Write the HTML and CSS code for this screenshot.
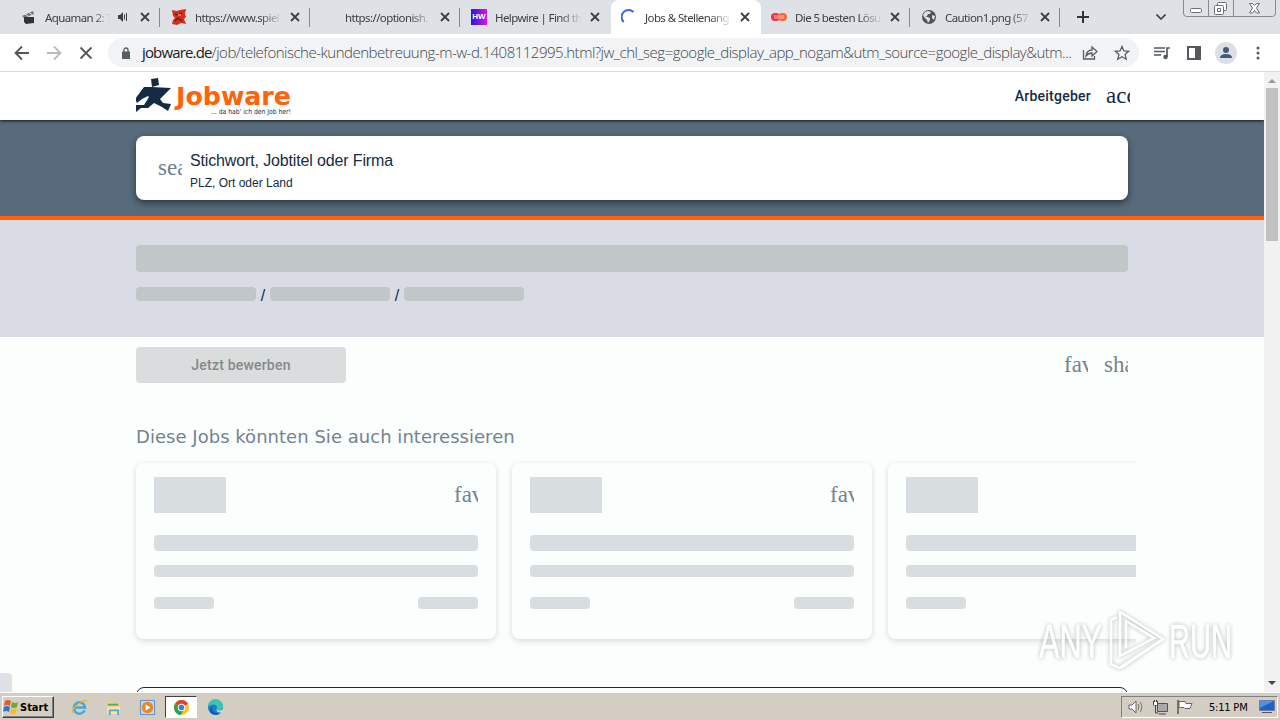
FILE: index.html
```html
<!DOCTYPE html>
<html lang="de">
<head>
    <meta charset="UTF-8">
    <meta name="viewport" content="width=device-width, initial-scale=1.0">
    <title>Jobs &amp; Stellenangebote</title>
    <link rel="stylesheet" href="styles.css">
</head>
<body>
    <!-- Tabs -->
    <div class="tabstrip">
        <div class="tab">
            <svg class="favicon" viewBox="0 0 16 16"><path d="M1 7L12 2l1 3L3 9z" fill="#777"/><path d="M3 8h10v6l-8 1-2-2z" fill="#333"/><path d="M4 5l3 2M8 3.500l3 2" stroke="#ddd"/></svg>
            <span class="tab-title with-audio">Aquaman 2: T</span>
            <svg class="audio" viewBox="0 0 12 12"><path d="M1 4h2l3-3v10L3 8H1z" fill="#3c4043"/><path d="M7.500 3.500v5M9.500 2v8" stroke="#3c4043" fill="none"/></svg>
            <svg class="close" viewBox="0 0 10 10"><path d="M1 1l8 8M9 1L1 9"/></svg>
        </div>
        <div class="tab">
            <svg class="favicon" viewBox="0 0 16 16"><path d="M1 1l5 1 3-1 6-1-1 5 1 3-2 2 2 5-5-1-4 2-5-1 1-4 2-2-2-2z" fill="#d3301f"/><path d="M4 5l3 1 4-2M4 12l3-3 4 3" stroke="#6b1712" fill="none" stroke-width="1.300"/><path d="M7 5h3v2H7z" fill="#f47b31"/></svg>
            <span class="tab-title">https://www.spiel</span>
            <svg class="close" viewBox="0 0 10 10"><path d="M1 1l8 8M9 1L1 9"/></svg>
        </div>
        <div class="tab">
            <span class="favicon"></span>
            <span class="tab-title">https://optionish.</span>
            <svg class="close" viewBox="0 0 10 10"><path d="M1 1l8 8M9 1L1 9"/></svg>
        </div>
        <div class="tab before-active">
            <span class="favicon helpwire">HW</span>
            <span class="tab-title">Helpwire | Find th</span>
            <svg class="close" viewBox="0 0 10 10"><path d="M1 1l8 8M9 1L1 9"/></svg>
        </div>
        <div class="tab active">
            <svg class="favicon" viewBox="0 0 16 16"><path d="M2.700 13A7 7 0 0 1 12.500 3" stroke="#4267d6" stroke-width="2" fill="none"/></svg>
            <span class="tab-title">Jobs &amp; Stellenang</span>
            <svg class="close" viewBox="0 0 10 10"><path d="M1 1l8 8M9 1L1 9"/></svg>
        </div>
        <div class="tab">
            <svg class="favicon" viewBox="0 0 16 16"><rect y="4" width="9" height="8" rx="4" fill="#ee344d"/><rect x="7" y="4" width="9" height="8" rx="4" fill="#f46b36"/><path d="M3 7h10M3 9h10" stroke="#ffd5c8" stroke-width=".8"/></svg>
            <span class="tab-title">Die 5 besten Lösu</span>
            <svg class="close" viewBox="0 0 10 10"><path d="M1 1l8 8M9 1L1 9"/></svg>
        </div>
        <div class="tab">
            <svg class="favicon" viewBox="0 0 16 16"><circle cx="8" cy="8" r="7" fill="#505458"/><path d="M7 2l3 1-1 2H7L6 7H4l5 2v2l-2 3-1-3-3-3-1-2 2-3zM11 6l3 1-1 4-2-2z" fill="#dee1e6"/></svg>
            <span class="tab-title">Caution1.png (57</span>
            <svg class="close" viewBox="0 0 10 10"><path d="M1 1l8 8M9 1L1 9"/></svg>
        </div>
        <svg class="new-tab" viewBox="0 0 12 12"><path d="M6 0v12M0 6h12"/></svg>
        <svg class="tab-search" viewBox="0 0 10 6"><path d="M0.500 0.500L5 5l4.500-4.500"/></svg>
        <svg class="window-controls" viewBox="0 0 93 17"><path d="M.5 0v13q0 3.500 3 3.500h86q3 0 3-3.500V0M25.500 0v16M50.500 0v16" fill="none" stroke="#858a92"/><g fill="#fff" stroke="#696e77"><rect x="7.500" y="8.500" width="11" height="4" rx="1"/><rect x="34.500" y="2.500" width="9" height="8" rx="1"/><rect x="31.500" y="5.500" width="9" height="9" rx="1"/><path d="M34.500 8.500h3v3h-3zM66.500 3.500h3l2 2 2-2h3l-3 4.500 3 5h-3l-2-2.500-2 2.500h-3l3-5z"/></g></svg>
    </div>

    <!-- Toolbar -->
    <div class="toolbar">
        <svg class="nav back" viewBox="0 0 16 16"><path d="M15 8H2M8 1.500L1.500 8 8 14.500"/></svg>
        <svg class="nav forward" viewBox="0 0 16 16"><path d="M1 8h13M8 1.500L14.500 8 8 14.500"/></svg>
        <svg class="nav stop" viewBox="0 0 16 16"><path d="M2.500 2.500l11 11M13.500 2.500l-11 11"/></svg>
        <div class="omnibox">
            <svg class="lock" viewBox="0 0 8 12"><path d="M0 4.500h8V12H0z" fill="#5a5e63"/><path d="M2 5V3a2 2 0 0 1 4 0v2" fill="none" stroke="#5a5e63" stroke-width="1.300"/></svg>
            <span class="url"><b>jobware.de</b>/job/telefonische-kundenbetreuung-m-w-d.1408112995.html?jw_chl_seg=google_display_app_nogam&amp;utm_source=google_display&amp;utm...</span>
            <svg class="share-icon" viewBox="0 0 16 16"><path d="M1.500 5v9h11v-3M4 11c.5-4 3-6 6-6V2l5 4.500L10 11V8c-2.500 0-4.500 1-6 3z"/></svg>
            <svg class="star-icon" viewBox="0 0 16 16"><path d="M8 1.500l1.900 4.400 4.800.4-3.600 3.200 1.100 4.700L8 11.700l-4.200 2.500 1.100-4.700-3.600-3.200 4.800-.4z"/></svg>
        </div>
        <svg class="media" viewBox="0 0 16 16"><path d="M0 3h11M0 6.500h11M0 10h7M13 12V3h3" stroke="#55595e" stroke-width="1.700" fill="none"/><circle cx="11.500" cy="12" r="2.200" fill="#55595e"/></svg>
        <svg class="panel" viewBox="0 0 14 14"><path d="M1 1h12v12H1z" fill="#fff" stroke="#55595e" stroke-width="2"/><path d="M8 1h5v12H8z" fill="#55595e"/></svg>
        <svg class="avatar" viewBox="0 0 22 22"><circle cx="11" cy="11" r="11" fill="#dcdfe5"/><circle cx="11" cy="8" r="3" fill="#48587b"/><path d="M5 16q0-4 6-4t6 4z" fill="#48587b"/></svg>
        <svg class="dots" viewBox="0 0 4 14"><circle cx="2" cy="2" r="1.500"/><circle cx="2" cy="7" r="1.500"/><circle cx="2" cy="12" r="1.500"/></svg>
    </div>

    <div class="viewport">
        <div class="page">
            <header class="header">
                <svg class="logo" viewBox="0 0 156 40">
                    <g fill="#142c43"><path d="M15 2l7-1 1 7-7 2z"/><path d="M8 10h8l19 1-11 11 3 4 8 1-3 7-6-4-8-4-6 5H5l-5 4v-7h8l5-8-1-1-6 3-5 4-2-4z"/></g>
                    <text class="logo-name" x="40" y="28" textLength="115" lengthAdjust="spacingAndGlyphs">Jobware</text>
                    <text class="logo-claim" x="75" y="37" textLength="80" lengthAdjust="spacingAndGlyphs">... da hab' ich den Job her!</text>
                </svg>
                <nav class="header-nav">
                    <a class="employer">Arbeitgeber</a>
                    <i class="icon">account_circle</i>
                </nav>
            </header>

            <section class="search">
                <div class="search-box">
                    <i class="icon">search</i>
                    <div>
                        <div class="keyword">Stichwort, Jobtitel oder Firma</div>
                        <div class="place">PLZ, Ort oder Land</div>
                    </div>
                </div>
            </section>

            <section class="job-head">
                <div class="ghost title-ghost"></div>
                <div class="crumbs">
                    <span class="ghost"></span><span class="slash">/</span><span class="ghost"></span><span class="slash">/</span><span class="ghost"></span>
                </div>
            </section>

            <div class="actions">
                <button class="apply" disabled>Jetzt bewerben</button>
                <i class="icon">favorite</i>
                <i class="icon">share</i>
            </div>

            <h2>Diese Jobs könnten Sie auch interessieren</h2>
            <div class="carousel">
                <article class="card">
                    <div class="card-top"><span class="thumb"></span><i class="icon">favorite</i></div>
                    <div class="line line-title"></div>
                    <div class="line line-sub"></div>
                    <div class="card-foot"><span class="line"></span><span class="line"></span></div>
                </article>
                <article class="card">
                    <div class="card-top"><span class="thumb"></span><i class="icon">favorite</i></div>
                    <div class="line line-title"></div>
                    <div class="line line-sub"></div>
                    <div class="card-foot"><span class="line"></span><span class="line"></span></div>
                </article>
                <article class="card">
                    <div class="card-top"><span class="thumb"></span></div>
                    <div class="line line-title"></div>
                    <div class="line line-sub"></div>
                    <div class="card-foot"><span class="line"></span><span class="line"></span></div>
                </article>
            </div>
            <div class="next-box"></div>
        </div>

        <div class="scrollbar">
            <svg viewBox="0 0 16 16"><path d="M4 11l4-4 4 4z" fill="#999"/></svg>
            <div class="thumb-bar"></div>
            <svg viewBox="0 0 16 16"><path d="M4 5h8l-4 4z" fill="#444"/></svg>
        </div>
        <div class="status-bubble"></div>
        <svg class="watermark" viewBox="0 0 200 66">
            <g class="mark">
                <text x="2" y="50" textLength="63" lengthAdjust="spacingAndGlyphs">ANY</text>
                <text x="132" y="50" textLength="63" lengthAdjust="spacingAndGlyphs">RUN</text>
                <path d="M83 48V4l43 27-42 29M83 4v44l34-18-28-17v27M80 9l-6 3v44l8 4 35-23"/>
            </g>
        </svg>
    </div>

    <!-- Taskbar -->
    <footer class="taskbar">
        <div class="start">
            <svg viewBox="0 0 16 16"><path d="M2 2q3-2 6 0L7 7Q4 5 1 7z" fill="#e45c27"/><path d="M9 3q3 2 6 0l-1 5q-3 2-6 0z" fill="#69ac32"/><path d="M1 8q3-2 6 0l-1 5q-3-2-6 0z" fill="#3575c7"/><path d="M8 9q3 2 6 0l-1 5q-3 2-6 0z" fill="#f4bd27"/></svg>
            <span>Start</span>
        </div>
        <div class="launch">
            <svg viewBox="0 0 18 18"><path d="M14.500 12A6 6 0 1 1 15 9H4.500" fill="none" stroke="#43a6dc" stroke-width="2.600"/><path d="M2 15Q0 11 8 5q7-5 9-3" fill="none" stroke="#e5b52e" stroke-width="1.300"/></svg>
        </div>
        <div class="launch">
            <svg viewBox="0 0 18 18"><path d="M2 3h6l2 2h6v11H2z" fill="#ecd27b"/><path d="M3 5h11v2H3z" fill="#5baa68"/><path d="M2 8h14v8H2z" fill="#f5e5a2"/><path d="M5 17v-5h9v5" stroke="#55a9d3" stroke-width="2" fill="none"/></svg>
        </div>
        <div class="launch">
            <svg viewBox="0 0 18 18"><path d="M1.500 1.500h15v15h-15z" fill="#b9d6ee" stroke="#5b91bf"/><circle cx="9" cy="9" r="6" fill="#ef8420"/><path d="M7 5.500l5 3.500-5 3.500z" fill="#fff"/></svg>
        </div>
        <div class="launch running">
            <svg viewBox="0 0 18 18"><circle cx="9" cy="9" r="8" fill="#f9c71f"/><path d="M9 9L2.100 5A8 8 0 0 1 16 5z" fill="#df4031"/><path d="M9 9L2.100 5a8 8 0 0 0 5.900 12l4-6z" fill="#2f9f50"/><circle cx="9" cy="9" r="4" fill="#fff"/><circle cx="9" cy="9" r="3" fill="#3d7de0"/></svg>
        </div>
        <div class="launch">
            <svg viewBox="0 0 18 18"><circle cx="9" cy="9" r="8" fill="#1682cf"/><path d="M1 8A8 8 0 0 1 17 8c0 4-5 5-7 3 2-3-1-6-4-5-2 0-4 1-5 2z" fill="#38c6b0"/><path d="M6 8c-2 4 2 8 8 7a8 8 0 0 1-8 1c-4-2-4-7 0-8z" fill="#155aa8"/><path d="M10 11c2 2 6 1 8-1l-1 4c-3 1-7 0-7-3z" fill="#d6d0c8"/></svg>
        </div>
        <div class="tray">
            <svg class="tray-icon" viewBox="0 0 17 16"><path d="M1 6h3l4-4v12l-4-4H1z" fill="#fff" stroke="#666"/><path d="M10 5q2 3 0 6M12.500 3q3 5 0 10" stroke="#777" fill="none"/></svg>
            <svg class="tray-icon" viewBox="0 0 17 16"><path d="M5.500 4.500h10v8h-10z" fill="#aaa" stroke="#555"/><path d="M7 15h7M1.500 2v4h4V2M3.500 6v8h3M2.500 1v2M4.500 1v2" stroke="#444" fill="none"/><path d="M2 3h3v3H2z" fill="#fff"/></svg>
            <svg class="tray-icon" viewBox="0 0 17 16"><path d="M2 1v14" stroke="#555" stroke-width="1.500"/><path d="M3 2.500h6l1 2h6l-2 5H9l-1-1H3z" fill="#fff" stroke="#666"/></svg>
            <span class="clock">5:11 PM</span>
            <svg class="desktop" viewBox="0 0 16 14"><path d="M.5.500h15v10H.5z" fill="#1d62c3" stroke="#77a"/><path d="M1 1h14L1 8z" fill="#4c91e2"/><path d="M3 12.500h10" stroke="#555"/></svg>
        </div>
    </footer>
</body>
</html>
```
FILE: styles.css
```css
* {
    box-sizing: border-box;
}

body {
    margin: 0;
    width: 1280px;
    height: 720px;
    overflow: hidden;
    display: flex;
    flex-direction: column;
    font-family: "Liberation Sans", Arial, sans-serif;
    color: #142c43;
}

svg {
    display: block;
    flex: none;
}

/* Browser tabs */
.tabstrip {
    height: 34px;
    flex: none;
    display: flex;
    background: #dee1e6;
    padding-left: 11px;
}

.tab {
    width: 150px;
    height: 34px;
    display: flex;
    align-items: center;
    padding: 0 11px 0 10px;
    position: relative;
    font: 11.5px "Noto Sans", sans-serif;
    color: #3c4043;
}

.tab::after {
    content: "";
    position: absolute;
    right: 1px;
    top: 8px;
    width: 1px;
    height: 19px;
    background: #85898f;
}

.tab.active::after,
.tab.before-active::after {
    display: none;
}

.tab.active {
    background: #fff;
    border-radius: 8px 8px 0 0;
}

.favicon {
    width: 16px;
    height: 16px;
    flex: none;
}

.helpwire {
    background: linear-gradient(90deg, #2815df, #d516e8);
    color: #fff;
    font: bold 8px/16px "Liberation Sans", sans-serif;
    text-align: center;
}

.tab-title {
    width: 88px;
    margin-left: 7px;
    padding-left: 1px;
    overflow: hidden;
    white-space: nowrap;
    letter-spacing: -0.6px;
    -webkit-mask-image: linear-gradient(90deg, #000 75%, transparent);
    mask-image: linear-gradient(90deg, #000 75%, transparent);
}

.with-audio {
    width: 66px;
}

.audio {
    width: 12px;
    height: 12px;
    margin-left: 7px;
}

.close {
    width: 10px;
    height: 10px;
    margin-left: auto;
    stroke: #3c4043;
    stroke-width: 1.8;
}

.new-tab {
    width: 12px;
    height: 12px;
    margin: 11px 0 0 16px;
    stroke: #303438;
    stroke-width: 2;
}

.tab-search {
    width: 10px;
    height: 6px;
    margin: 14px 0 0 67px;
    fill: none;
    stroke: #3c4043;
    stroke-width: 1.6;
}

.window-controls {
    width: 93px;
    height: 17px;
    margin-left: 17px;
}

/* Toolbar */
.toolbar {
    height: 38px;
    flex: none;
    display: flex;
    align-items: center;
    background: #fff;
    border-bottom: 1px solid #d9dbdd;
    padding-left: 14px;
}

.nav {
    width: 16px;
    height: 16px;
    margin-right: 16px;
    fill: none;
    stroke: #54585d;
    stroke-width: 1.8;
}

.forward {
    stroke: #b9bbbd;
}

.omnibox {
    width: 1031px;
    height: 29px;
    border-radius: 15px;
    background: #f1f3f4;
    display: flex;
    align-items: center;
    padding-left: 14px;
    margin-left: -2px;
}

.lock {
    width: 8px;
    height: 12px;
}

.url {
    width: 931px;
    margin-left: 12px;
    padding-bottom: 2px;
    white-space: nowrap;
    font: 300 15px "Open Sans", "Noto Sans", sans-serif;
    letter-spacing: -0.49px;
    color: #44484d;
}

.url b {
    font-weight: 400;
    letter-spacing: -0.85px;
    color: #202124;
}

.share-icon,
.star-icon {
    width: 16px;
    height: 16px;
    margin-left: 9px;
    fill: none;
    stroke: #5a5e63;
    stroke-width: 1.3;
}

.star-icon {
    margin-left: 16px;
}

.media {
    width: 16px;
    height: 16px;
    margin-left: 15px;
}

.panel {
    width: 14px;
    height: 14px;
    margin-left: 17px;
}

.avatar {
    width: 22px;
    height: 22px;
    margin-left: 14px;
}

.dots {
    width: 4px;
    height: 14px;
    margin-left: 19px;
    fill: #55595e;
}

/* Page */
.viewport {
    height: 620px;
    flex: none;
    display: flex;
    position: relative;
    overflow: hidden;
    background: #fafefd;
}

.page {
    width: 1264px;
    height: 620px;
    overflow: hidden;
}

.header {
    height: 48px;
    display: flex;
    justify-content: space-between;
    padding: 0 134px 0 136px;
    background: #fff;
    position: relative;
    box-shadow: 0 1px 3px rgba(0, 0, 0, 0.8);
}

.logo {
    width: 156px;
    height: 40px;
    margin-top: 5px;
}

.logo-name {
    font: bold 24px "DejaVu Sans", sans-serif;
    fill: #ff6208;
}

.logo-claim {
    font: 7px "DejaVu Sans", sans-serif;
    fill: #142c43;
}

.header-nav {
    display: flex;
    align-items: center;
}

.employer {
    font: 500 14px Roboto, sans-serif;
    letter-spacing: 0.25px;
    margin-right: 15px;
}

/* icon names show as clipped text until the icon font has loaded */
.icon {
    width: 24px;
    height: 24px;
    flex: none;
    overflow: hidden;
    font: normal 23px/24px "Liberation Serif", serif;
    white-space: nowrap;
}

.search {
    height: 100px;
    padding: 16px 136px 0;
    background: #576b7c;
    border-bottom: 4px solid #ff6208;
}

.search-box {
    height: 64px;
    display: flex;
    padding: 14px 22px;
    background: #fff;
    border-radius: 8px;
    box-shadow: 0 3px 7px rgba(0, 0, 0, 0.5);
}

.search-box .icon {
    margin: 6px 8px 0 0;
    color: #708090;
}

.keyword {
    padding-top: 1px;
    font-size: 16px;
    line-height: 20px;
    letter-spacing: -0.14px;
}

.place {
    margin-top: 4px;
    font-size: 12px;
    line-height: 16px;
}

.job-head {
    height: 117px;
    padding: 25px 136px 0;
    background: #d9dce4;
}

.ghost {
    display: block;
    background: #c1c6c9;
    border-radius: 4px;
}

.title-ghost {
    height: 27px;
}

.crumbs {
    display: flex;
    margin-top: 15px;
}

.crumbs .ghost {
    width: 120px;
    height: 14px;
}

.slash {
    width: 14px;
    text-align: center;
    font: 16px/18px "Liberation Sans", sans-serif;
}

.actions {
    display: flex;
    padding: 10px 136px 0;
    color: #76828f;
}

.actions .icon {
    margin: 6px 0 0 16px;
}

.apply {
    width: 210px;
    height: 36px;
    margin-right: auto;
    border: 0;
    border-radius: 4px;
    background: #dadddd;
    color: #858988;
    font: 500 14px Roboto, sans-serif;
    letter-spacing: 0.2px;
}

h2 {
    margin: 42px 0 0 136px;
    font: 18px/24px "DejaVu Sans", Verdana, sans-serif;
    letter-spacing: 0.03px;
    color: #76828f;
    white-space: nowrap;
}

.carousel {
    width: 1008px;
    height: 194px;
    margin: 6px 0 0 128px;
    padding: 8px;
    padding-right: 0;
    display: flex;
    gap: 16px;
    overflow: hidden;
}

.card {
    width: 360px;
    height: 176px;
    flex: none;
    padding: 14px 18px;
    border-radius: 8px;
    background: #fafefd;
    box-shadow: 0 2px 6px rgba(0, 0, 0, 0.15);
}

.card-top {
    display: flex;
    justify-content: space-between;
    color: #76828f;
}

.card-top .icon {
    margin-top: 6px;
}

.thumb {
    width: 72px;
    height: 36px;
    background: #d8dde0;
}

.line {
    display: block;
    height: 12px;
    background: #d8dde0;
    border-radius: 4px;
}

.line-title {
    height: 16px;
    margin-top: 22px;
}

.line-sub {
    margin-top: 14px;
}

.card-foot {
    display: flex;
    justify-content: space-between;
    margin-top: 20px;
}

.card-foot .line {
    width: 60px;
}

.next-box {
    width: 992px;
    height: 30px;
    margin: 38px 0 0 136px;
    border: 1px solid #142c43;
    border-radius: 8px;
}

.scrollbar {
    width: 16px;
    height: 620px;
    display: flex;
    flex-direction: column;
    background: #f1f1f1;
}

.scrollbar svg {
    width: 16px;
    height: 16px;
}

.thumb-bar {
    width: 12px;
    height: 153px;
    margin: 0 2px auto;
    background: #c1c1c1;
}

.status-bubble {
    position: absolute;
    left: 0;
    bottom: 0;
    width: 12px;
    height: 19px;
    background: #dee1e6;
    border-radius: 0 4px 0 0;
}

.watermark {
    position: absolute;
    left: 1037px;
    top: 536px;
    width: 200px;
    height: 66px;
}

.mark {
    fill: none;
    stroke: #fff;
    stroke-width: 2.5;
    opacity: 0.8;
    filter: drop-shadow(0 0 2px rgba(0, 0, 0, 0.35));
}

.mark text {
    font: 48px "Liberation Sans", sans-serif;
    fill: #fff;
    stroke-width: 0.6;
}

/* Windows taskbar */
.taskbar {
    height: 28px;
    flex: none;
    display: flex;
    align-items: center;
    padding: 1px 2px 0;
    background: #d4cdc4;
    border-top: 1px solid #fff;
}

.start {
    width: 52px;
    height: 22px;
    display: flex;
    align-items: center;
    border: 1px solid;
    border-color: #fff #404040 #404040 #fff;
    box-shadow: inset -1px -1px #808080;
    font: bold 11px "DejaVu Sans Condensed", "DejaVu Sans", sans-serif;
    color: #000;
    margin-right: 9px;
}

.start svg {
    width: 16px;
    height: 16px;
    margin-right: 1px;
}

.launch {
    width: 32px;
    height: 22px;
    margin-right: 2px;
    display: flex;
    align-items: center;
    justify-content: center;
}

.launch svg {
    width: 17px;
    height: 17px;
}

.running {
    background: #fff;
    border: 1px solid;
    border-color: #404040 #fff #fff #404040;
}

.tray {
    width: 157px;
    height: 22px;
    margin-left: auto;
    display: flex;
    align-items: center;
    border: 1px solid;
    border-color: #808080 #fff #fff #808080;
    padding-left: 6px;
}

.tray-icon {
    width: 17px;
    height: 16px;
    margin-right: 7px;
}

.clock {
    width: 50px;
    margin-left: 9px;
    font: 11px "DejaVu Sans Condensed", "DejaVu Sans", sans-serif;
    letter-spacing: -0.2px;
    white-space: nowrap;
    color: #000;
}

.desktop {
    width: 16px;
    height: 14px;
}
```
